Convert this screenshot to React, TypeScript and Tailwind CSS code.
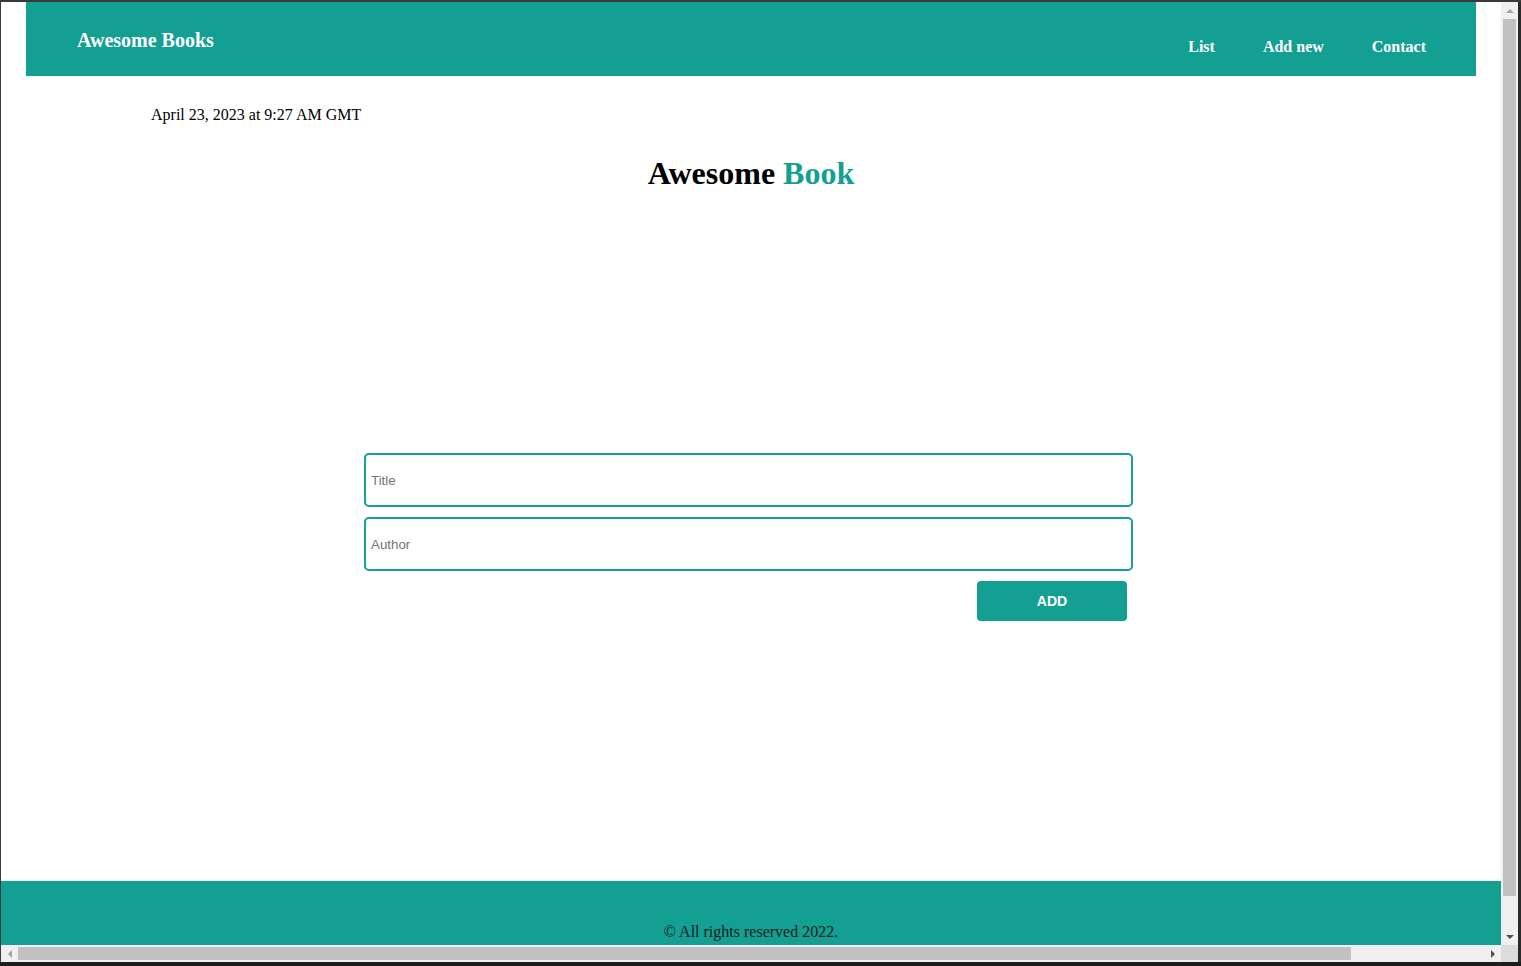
import React from "react";

const serif = { fontFamily: '"Liberation Serif", "Times New Roman", serif' };
const sans = { fontFamily: '"Liberation Sans", Arial, sans-serif' };

export default function App() {
  return (
    <div className="w-[1521px] h-[966px] overflow-hidden bg-[#1f1f1f] flex flex-col">
      <div className="h-[2px] shrink-0 bg-[#3a3a3a]" />
      <div className="flex h-[943px] shrink-0">
        <div className="w-[1px] bg-[#3a3a3a]" />
        <div className="w-[1500px] h-full bg-white flex flex-col" style={serif}>
          <header className="mx-[25px] h-[74px] shrink-0 bg-[#13a093] flex justify-between">
            <div className="pl-[51px] pt-[26px] text-[20px] font-bold text-white leading-[24px]">
              Awesome Books
            </div>
            <nav className="flex gap-[48px] pr-[50px] pt-[35px] text-[16px] font-bold text-white leading-[20px]">
              <span>List</span>
              <span>Add new</span>
              <span>Contact</span>
            </nav>
          </header>
          <main className="flex-1 flex flex-col">
            <div className="pl-[150px] pt-[29px] text-[16px] text-black leading-[19px]">
              April 23, 2023 at 9:27 AM GMT
            </div>
            <h1 className="mt-[31px] text-center text-[32px] font-bold leading-[37px] text-black">
              Awesome <span className="text-[#13a093]">Book</span>
            </h1>
            <form className="ml-[363px] mt-[261px] w-[769px] flex flex-col gap-[10px]" style={sans}>
              <input
                placeholder="Title"
                className="h-[54px] w-full border-2 border-[#13a093] rounded-[5px] px-[5px] text-[13.33px] text-black placeholder:text-[#757575] outline-none"
              />
              <input
                placeholder="Author"
                className="h-[54px] w-full border-2 border-[#13a093] rounded-[5px] px-[5px] text-[13.33px] text-black placeholder:text-[#757575] outline-none"
              />
              <div className="flex justify-end pr-[6px]">
                <button
                  type="button"
                  className="w-[150px] h-[40px] bg-[#13a093] rounded-[4px] text-white text-[14px] font-bold"
                >
                  ADD
                </button>
              </div>
            </form>
          </main>
          <footer className="h-[64px] shrink-0 bg-[#13a093] pt-[41px] text-center text-[16px] leading-[19px] text-[#1a1a1a]">
            © All rights reserved 2022.
          </footer>
        </div>
        <div className="w-[17px] h-full bg-[#f0f0f0] flex flex-col items-center">
          <div className="h-[17px] w-full flex items-center justify-center">
            <div className="w-0 h-0 border-l-[4px] border-r-[4px] border-b-[4px] border-l-transparent border-r-transparent border-b-[#a3a3a3]" />
          </div>
          <div className="w-[13px] h-[877px] bg-[#c1c1c1]" />
          <div className="flex-1" />
          <div className="h-[17px] w-full flex items-center justify-center">
            <div className="w-0 h-0 border-l-[4px] border-r-[4px] border-t-[4px] border-l-transparent border-r-transparent border-t-[#505050]" />
          </div>
        </div>
        <div className="flex-1 bg-[#2a2a2a]" />
      </div>
      <div className="flex h-[17px] shrink-0">
        <div className="w-[1px] bg-[#3a3a3a]" />
        <div className="w-[1500px] bg-[#f0f0f0] flex items-center">
          <div className="w-[17px] h-full flex items-center justify-center">
            <div className="w-0 h-0 border-t-[4px] border-b-[4px] border-r-[4px] border-t-transparent border-b-transparent border-r-[#a3a3a3]" />
          </div>
          <div className="w-[1333px] h-[13px] bg-[#c1c1c1]" />
          <div className="flex-1" />
          <div className="w-[17px] h-full flex items-center justify-center">
            <div className="w-0 h-0 border-t-[4px] border-b-[4px] border-l-[4px] border-t-transparent border-b-transparent border-l-[#505050]" />
          </div>
        </div>
        <div className="w-[17px] bg-[#dcdcdc]" />
        <div className="flex-1 bg-[#2a2a2a]" />
      </div>
      <div className="flex-1 bg-[#1c1c1c]" />
    </div>
  );
}
